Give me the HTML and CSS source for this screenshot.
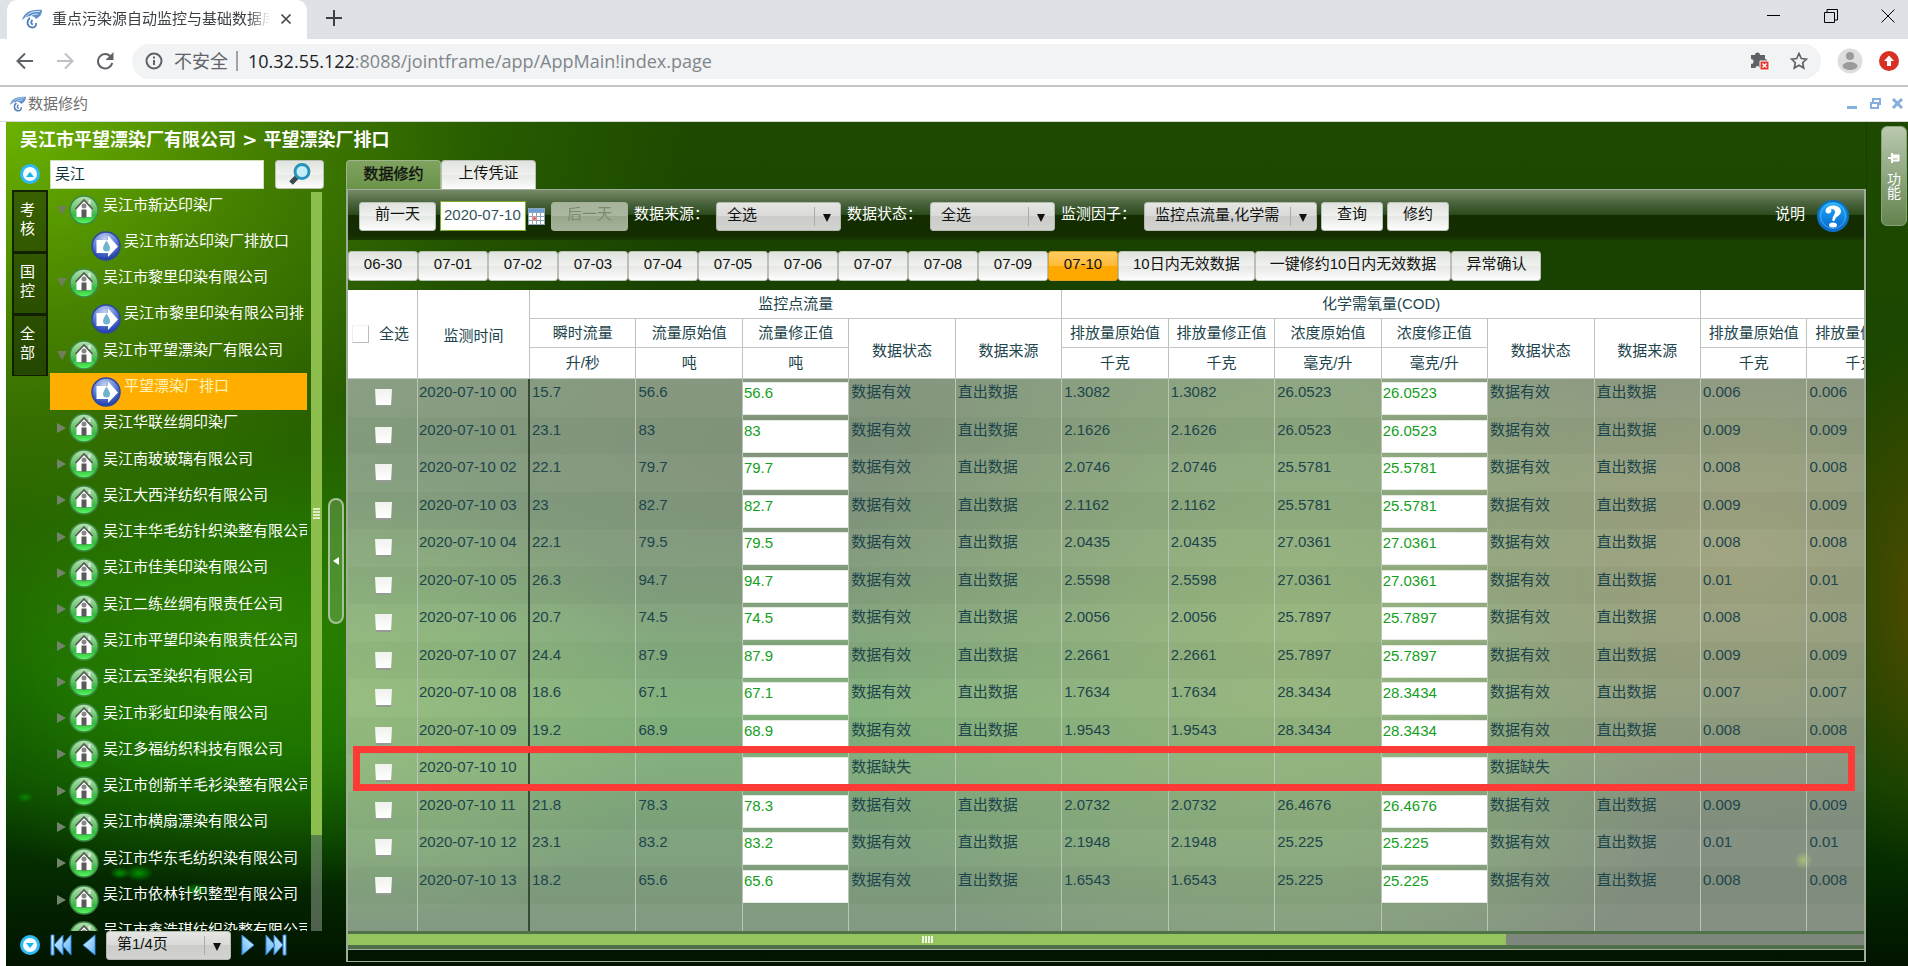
FILE: index.html
```html
<!DOCTYPE html>
<html lang="zh-CN">
<head>
    <meta charset="UTF-8">
    <meta name="viewport" content="width=device-width, initial-scale=1.0">
    <title>重点污染源自动监控与基础数据库</title>
    <link rel="stylesheet" href="styles.css">
</head>
<body>
    <!-- Shared icons -->
    <svg class="defs" width="0" height="0" aria-hidden="true">
        <defs>
            <linearGradient id="g-green" x1="0" y1="0" x2="0" y2="1">
                <stop offset="0" stop-color="#b9e2b6"/>
                <stop offset="0.45" stop-color="#6cc46e"/>
                <stop offset="0.7" stop-color="#35b843"/>
                <stop offset="1" stop-color="#5bff62"/>
            </linearGradient>
            <radialGradient id="g-blue" cx="45%" cy="25%" r="75%">
                <stop offset="0" stop-color="#c3d0ee"/>
                <stop offset="0.5" stop-color="#6a88dc"/>
                <stop offset="1" stop-color="#1b3aa8"/>
            </radialGradient>
            <linearGradient id="g-help" x1="0" y1="0" x2="0" y2="1">
                <stop offset="0" stop-color="#19aef5"/>
                <stop offset="1" stop-color="#0b63cf"/>
            </linearGradient>
            <linearGradient id="g-nav" x1="0" y1="0" x2="1" y2="1">
                <stop offset="0" stop-color="#e2f5ff"/>
                <stop offset="1" stop-color="#5fb4f5"/>
            </linearGradient>
        </defs>
        <symbol id="i-logo" viewBox="0 0 20 20">
            <path d="M0 11C2 4 8 0 20 1c0 4-2 7-6 9C12 6 6 6 0 11z" fill="#5c8fc9"/>
            <path d="M3 9C6 4 11 2 18 2.500M6 9c3-3 6-4 10-4" fill="none" stroke="#dceaf8"/>
            <path d="M8 9c-4 3-3 9 2 9.500c3 .2 4.500-2 4-4.500M10.500 11c-2 2-1.500 4 .5 4.500" fill="none" stroke="#4f7fb8" stroke-width="1.8"/>
        </symbol>
        <symbol id="i-house" viewBox="0 0 30 30">
            <circle cx="15" cy="15" r="14" fill="url(#g-green)" stroke="#3d8a45" stroke-width="1.500"/>
            <path d="M15 5.500L7.500 13v9h15v-9z" fill="#fff"/>
            <path d="M6.500 14l8.500-9 8.500 9" fill="none" stroke="#565c56" stroke-width="1.8"/>
            <path d="M20.500 5v4" stroke="#eee" stroke-width="2"/>
            <rect x="12.500" y="14.500" width="5" height="8" fill="#5a5a5a"/>
            <circle cx="15" cy="11" r="2.500" fill="#888"/>
        </symbol>
        <symbol id="i-outlet" viewBox="0 0 30 30">
            <circle cx="15" cy="15" r="14" fill="url(#g-blue)" stroke="#2c4a9e" stroke-width="1.500"/>
            <path d="M5.500 9H17V4.500l10 11L17 26v-4H5.500z" fill="#fff"/>
            <path d="M15.500 9.500c2 3 3.500 5.500 3.500 7.500a3.500 3.500 0 0 1-7 0c0-2 1.500-4.500 3.500-7.500z" fill="#72b4ce"/>
        </symbol>
        <symbol id="i-first" viewBox="0 0 22 22">
            <path d="M1 1h3v20H1zM13 1v20L4 11zM21 1v20l-9-10z" fill="url(#g-nav)" stroke="#2c86dd"/>
        </symbol>
        <symbol id="i-prev" viewBox="0 0 14 22">
            <path d="M13 1v20L1 11z" fill="url(#g-nav)" stroke="#2c86dd"/>
        </symbol>
    </svg>

    <!-- Browser tabs -->
    <div class="tabstrip">
        <div class="browser-tab">
            <svg class="favicon"><use href="#i-logo"/></svg>
            <span class="browser-tab-title">重点污染源自动监控与基础数据库</span>
            <button class="plain" aria-label="关闭标签页"><svg width="12" height="12" viewBox="0 0 12 12"><path d="M1.500 1.500l9 9M10.500 1.500l-9 9" stroke="#45494d" stroke-width="1.700"/></svg></button>
        </div>
        <button class="plain new-tab" aria-label="新标签页"><svg width="16" height="16" viewBox="0 0 16 16"><path d="M8 0v16M0 8h16" stroke="#3c4043" stroke-width="2"/></svg></button>
        <div class="window-buttons">
            <button class="plain" aria-label="最小化"><svg width="14" height="14" viewBox="0 0 14 14"><path d="M0 6.500h13" stroke="#000"/></svg></button>
            <button class="plain" aria-label="还原"><svg width="14" height="14" viewBox="0 0 14 14" fill="none" stroke="#000"><path d="M.5 3.500h10v10H.5zM3 3V.5h10.500V11H11"/></svg></button>
            <button class="plain" aria-label="关闭"><svg width="14" height="14" viewBox="0 0 14 14"><path d="M.5.5l13 13M13.500.5l-13 13" stroke="#000"/></svg></button>
        </div>
    </div>

    <!-- Address bar -->
    <div class="toolbar">
        <button class="plain" aria-label="后退"><svg width="18" height="18" viewBox="0 0 18 18" fill="none" stroke="#5f6368" stroke-width="2"><path d="M17 9H2M9 1.500L1.500 9 9 16.500"/></svg></button>
        <button class="plain" aria-label="前进"><svg width="18" height="18" viewBox="0 0 18 18" fill="none" stroke="#bdc1c6" stroke-width="2"><path d="M1 9h15M9 1.500L16.500 9 9 16.500"/></svg></button>
        <button class="plain" aria-label="刷新"><svg width="18" height="18" viewBox="0 0 18 18"><path d="M15 5a7.200 7.200 0 1 0 1.200 6" fill="none" stroke="#5f6368" stroke-width="2"/><path d="M17.500 0v8h-8z" fill="#5f6368"/></svg></button>
        <div class="omnibox">
            <svg width="18" height="18" viewBox="0 0 18 18"><circle cx="9" cy="9" r="7.500" fill="none" stroke="#5f6368" stroke-width="2"/><path d="M9 8v5M9 4.500v2" stroke="#5f6368" stroke-width="2"/></svg>
            <span class="insecure">不安全</span>
            <span class="url"><b>10.32.55.122</b>:8088/jointframe/app/AppMain!index.page</span>
            <svg width="20" height="20" viewBox="0 0 20 20"><path d="M1 4h4a2.500 2.500 0 0 1 5 0h5v4a2.500 2.500 0 0 1 0 5v4H9.500a2 2 0 0 0-4 0H1v-4a2.500 2.500 0 0 0 0-5z" fill="#5f6368"/><path d="M10 10h9v9h-9z" fill="#e5372d" stroke="#fff"/><path d="M12.500 12.500l4 4M16.500 12.500l-4 4" stroke="#fff" stroke-width="1.500"/></svg>
            <svg width="18" height="18" viewBox="0 0 18 18"><path d="M9 1.500l2.300 5 5.200.6-3.800 3.600 1 5.300L9 13.300 4.300 16l1-5.300L1.500 7.100l5.200-.6z" fill="none" stroke="#5f6368" stroke-width="1.700"/></svg>
        </div>
        <svg width="26" height="26" viewBox="0 0 26 26"><circle cx="13" cy="13" r="12.500" fill="#dedede"/><circle cx="13" cy="8" r="4" fill="#9b9b9b"/><ellipse cx="13" cy="18" rx="7.500" ry="4" fill="#9b9b9b"/></svg>
        <svg width="20" height="20" viewBox="0 0 20 20"><circle cx="10" cy="10" r="10" fill="#d93025"/><path d="M10 4.500l5 5.500h-3v5H8v-5H5z" fill="#fff"/></svg>
    </div>

    <!-- Inner window title -->
    <div class="window-title">
        <svg class="window-logo"><use href="#i-logo"/></svg>
        <span>数据修约</span>
        <svg width="56" height="12" viewBox="0 0 56 12" fill="none" stroke="#86aede">
            <path d="M0 9.500h10" stroke-width="3"/>
            <path d="M26 4V1h7v5h-3" stroke-width="2"/><path d="M24 5h7v5h-7z" stroke-width="2"/>
            <path d="M46 1l9 9M55 1l-9 9" stroke-width="3"/>
        </svg>
    </div>

    <div class="app">
        <div class="workspace">
            <h1>吴江市平望漂染厂有限公司 &gt; 平望漂染厂排口</h1>
            <div class="columns">
                <aside class="sidebar">
                    <div class="search-row">
                        <button class="plain round up" aria-label="上翻"></button>
                        <input type="text" class="search" value="吴江" aria-label="企业名称">
                        <button class="btn search-btn" aria-label="搜索">
                            <svg width="24" height="24" viewBox="0 0 24 24"><path d="M9 15l-6 6" stroke="#3b4a50" stroke-width="5"/><circle cx="14" cy="9.500" r="7" fill="#c6ecf7" stroke="#2795bb" stroke-width="3"/></svg>
                        </button>
                    </div>
                    <div class="tree-area">
                        <div class="side-tabs">
                            <button>考<br>核</button>
                            <button>国<br>控</button>
                            <button>全<br>部</button>
                        </div>
                        <div class="tree-view"><ul id="tree"></ul></div>
                        <div class="vscroll"><div class="vthumb"></div></div>
                        <button class="plain collapse" aria-label="收起"></button>
                    </div>
                    <div class="pager">
                        <button class="plain round down" aria-label="下翻"></button>
                        <button class="plain" aria-label="首页"><svg width="22" height="22"><use href="#i-first"/></svg></button>
                        <button class="plain" aria-label="上一页"><svg width="14" height="22"><use href="#i-prev"/></svg></button>
                        <span class="select page-select"><select aria-label="页码"><option>第1/4页</option></select></span>
                        <button class="plain flip" aria-label="下一页"><svg width="14" height="22"><use href="#i-prev"/></svg></button>
                        <button class="plain flip" aria-label="末页"><svg width="22" height="22"><use href="#i-first"/></svg></button>
                    </div>
                </aside>

                <main class="main">
                    <div class="tabs">
                        <button class="tab active">数据修约</button>
                        <button class="tab">上传凭证</button>
                    </div>
                    <div class="panel">
                        <!-- Filters -->
                        <div class="filters">
                            <button class="btn day-btn">前一天</button>
                            <input type="text" class="date" value="2020-07-10" aria-label="日期">
                            <svg class="calendar" width="17" height="17" viewBox="0 0 17 17"><path d="M0 0h17v17H0z" fill="#8fa3b8"/><path d="M1 1h15v3H1z" fill="#6f9fd8"/><path d="M1 5h3v3H1zM5 5h3v3H5zM9 5h3v3H9zM13 5h3v3h-3zM1 9h3v3H1zM9 9h3v3H9zM13 9h3v3h-3zM1 13h3v3H1zM5 13h3v3H5zM9 13h3v3H9zM13 13h3v3h-3z" fill="#fff"/><path d="M5 9h3v3H5z" fill="#f0433a" stroke="#f79a94"/></svg>
                            <button class="btn day-btn" disabled>后一天</button>
                            <label for="source" class="first-label">数据来源：</label>
                            <span class="select"><select id="source"><option>全选</option></select></span>
                            <label for="state">数据状态：</label>
                            <span class="select"><select id="state"><option>全选</option></select></span>
                            <label for="factor">监测因子：</label>
                            <span class="select factor"><select id="factor"><option>监控点流量,化学需</option></select></span>
                            <button class="btn small-btn">查询</button>
                            <button class="btn small-btn">修约</button>
                            <span class="help-text">说明</span>
                            <button class="plain" aria-label="帮助"><svg width="32" height="32" viewBox="0 0 32 32"><circle cx="16" cy="16" r="15" fill="url(#g-help)" stroke="#0d6fc4" stroke-width="2"/><circle cx="16" cy="16" r="12.500" fill="none" stroke="#6cc8fa" stroke-opacity=".6"/><path d="M8.500 11c0-3 3-5.500 7.500-5.500 5 0 8 2.500 8 6 0 4-5.500 4.500-6.500 9.500h-2c-.5-5 2.500-6 2.500-9 0-2.500-2-3.500-4-3 1 2 0 4.500-2.500 4.500-2 0-3-1-3-2.500z" fill="#fff"/><ellipse cx="16" cy="25" rx="4" ry="2.500" fill="#fff"/></svg></button>
                        </div>

                        <div class="days" id="days"></div>

                        <div class="grid">
                            <table>
                                <colgroup><col class="col-check"><col class="col-time"><col span="13"></colgroup>
                                <thead>
                                    <tr>
                                        <th rowspan="3" class="check-all"><label><input type="checkbox"> 全选</label></th>
                                        <th rowspan="3" class="tall">监测时间</th>
                                        <th colspan="5">监控点流量</th>
                                        <th colspan="6">化学需氧量(COD)</th>
                                        <th colspan="2"></th>
                                    </tr>
                                    <tr>
                                        <th>瞬时流量</th>
                                        <th>流量原始值</th>
                                        <th>流量修正值</th>
                                        <th rowspan="2" class="tall">数据状态</th>
                                        <th rowspan="2" class="tall">数据来源</th>
                                        <th>排放量原始值</th>
                                        <th>排放量修正值</th>
                                        <th>浓度原始值</th>
                                        <th>浓度修正值</th>
                                        <th rowspan="2" class="tall">数据状态</th>
                                        <th rowspan="2" class="tall">数据来源</th>
                                        <th>排放量原始值</th>
                                        <th>排放量修正值</th>
                                    </tr>
                                    <tr class="units">
                                        <th>升/秒</th>
                                        <th>吨</th>
                                        <th>吨</th>
                                        <th>千克</th>
                                        <th>千克</th>
                                        <th>毫克/升</th>
                                        <th>毫克/升</th>
                                        <th>千克</th>
                                        <th>千克</th>
                                    </tr>
                                </thead>
                                <tbody id="rows"></tbody>
                            </table>
                            <div class="highlight"></div>
                        </div>
                        <div class="hscroll"><div class="hthumb"></div></div>
                        <div class="panel-foot"></div>
                    </div>
                </main>
            </div>
        </div>
        <div class="dock">
            <button class="dock-tab">
                <svg width="12" height="12" viewBox="0 0 12 12"><path d="M0 6h4M4 1v10M4 3.500h7.500M4 8.500h7.500M10.500 3v6M4 5.500h6" fill="none" stroke="#fff" stroke-width="2"/></svg>
                <span>功<br>能</span>
            </button>
        </div>
    </div>

    <script src="script.js"></script>
</body>
</html>
```

FILE: styles.css
```css
* {
    box-sizing: border-box;
}
body {
    margin: 0;
    height: 100vh;
    display: flex;
    flex-direction: column;
    overflow: hidden;
    background: #fff;
    font-family: "Liberation Sans", "Noto Sans CJK SC", sans-serif;
    font-size: 15px;
    line-height: 20px;
}
button, input, select {
    font: inherit;
    margin: 0;
}
button {
    padding: 0;
    border: none;
    cursor: pointer;
}
svg {
    display: block;
    flex: none;
}
.defs {
    position: absolute;
}
.plain {
    background: none;
}

/* Browser */
.tabstrip {
    height: 39px;
    flex: none;
    display: flex;
    align-items: center;
    background: #dee1e6;
    padding-left: 7px;
}
.browser-tab {
    width: 300px;
    height: 39px;
    display: flex;
    align-items: center;
    padding: 0 15px 2px;
    background: #fff;
    border-radius: 10px 10px 0 0;
}
.favicon {
    width: 20px;
    height: 20px;
}
.browser-tab-title {
    width: 219px;
    margin: 0 10px;
    overflow: hidden;
    white-space: nowrap;
    color: #3c4043;
    -webkit-mask-image: linear-gradient(90deg, #000 90%, transparent);
    mask-image: linear-gradient(90deg, #000 90%, transparent);
}
.new-tab {
    margin-left: 19px;
    padding-bottom: 3px;
}
.window-buttons {
    margin-left: auto;
    display: flex;
    gap: 43px;
    padding: 0 13px 8px 0;
}
.toolbar {
    height: 48px;
    flex: none;
    display: flex;
    align-items: center;
    padding: 0 9px 2px 16px;
    border-bottom: 2px solid #c4c6c9;
}
.toolbar > button {
    margin-right: 22px;
}
.toolbar > svg {
    margin-left: 16px;
}
.omnibox {
    flex: 1;
    height: 35px;
    margin-left: -4px;
    display: flex;
    align-items: center;
    padding: 0 13px;
    border-radius: 18px;
    background: #f1f3f4;
    font-family: "Open Sans", "Noto Sans CJK SC", sans-serif;
    font-size: 18px;
    color: #80868b;
}
.omnibox svg:last-child {
    margin-left: 20px;
}
.insecure {
    margin-left: 11px;
    padding-right: 8px;
    border-right: 2px solid #a0a4a8;
    color: #5f6368;
}
.url {
    flex: 1;
    margin-left: 10px;
}
.url b {
    font-weight: normal;
    color: #202124;
}
.window-title {
    height: 35px;
    flex: none;
    display: flex;
    align-items: center;
    padding: 0 5px 0 8px;
    border-bottom: 1px solid #d5d8d2;
    color: #6e6e6e;
}
.window-title span {
    flex: 1;
}
.window-logo {
    width: 20px;
    height: 16px;
}

/* Application */
.app {
    flex: 1;
    min-height: 0;
    margin-left: 6px;
    display: flex;
    background:
        radial-gradient(ellipse 10px 6px at 6% 89%, rgba(0, 190, 0, 0.7), transparent),
        radial-gradient(ellipse 14px 8px at 7% 89%, rgba(0, 190, 0, 0.7), transparent),
        radial-gradient(ellipse 14px 7px at 10% 91%, rgba(0, 180, 0, 0.7), transparent),
        radial-gradient(ellipse 10px 6px at 4% 82%, rgba(0, 170, 0, 0.6), transparent),
        radial-gradient(ellipse 8px 5px at 1% 80%, rgba(0, 170, 0, 0.6), transparent),
        radial-gradient(ellipse 7% 32% at 101% 57%, #514c00, transparent),
        radial-gradient(ellipse 36% 68% at 0 0, #6cb200, rgba(78, 140, 0, 0.85) 35%, rgba(50, 110, 0, 0.5) 70%, transparent),
        radial-gradient(ellipse 24% 30% at 13% 61%, #2b8200, rgba(32, 122, 0, 0.9) 45%, transparent),
        linear-gradient(180deg, #1d4a00, #1a4400 45%, #084000 78%, #032000 94%, #021400);
}
.workspace {
    flex: 1;
    min-width: 0;
    display: flex;
    flex-direction: column;
    padding-bottom: 4px;
}
h1 {
    height: 38px;
    margin: 0;
    padding: 6px 14px;
    font-family: "DejaVu Sans", "Noto Sans CJK SC", sans-serif;
    font-size: 18px;
    line-height: 24px;
    color: #fff;
}
.columns {
    flex: 1;
    min-height: 0;
    display: flex;
}
.dock {
    width: 42px;
    padding: 4px 1px 0 14px;
    border-left: 1px solid rgba(0, 0, 0, 0.15);
}
.dock-tab {
    width: 26px;
    height: 100px;
    display: flex;
    flex-direction: column;
    align-items: center;
    justify-content: center;
    gap: 8px;
    border: 1px solid #8aa27c;
    border-radius: 6px;
    background: linear-gradient(#b9c9ae, #63834f);
    color: #fff;
    font-size: 14px;
    line-height: 14px;
}

/* Sidebar */
.sidebar {
    width: 340px;
    flex: none;
    display: flex;
    flex-direction: column;
}
.search-row {
    height: 30px;
    display: flex;
    align-items: center;
    padding: 0 0 2px 14px;
}
.round {
    width: 20px;
    height: 20px;
    display: flex;
    align-items: center;
    justify-content: center;
    border: 3px solid #2fb9f2;
    border-radius: 50%;
    background: #f4fcff;
}
.round::after {
    content: "";
    border: 4px solid transparent;
}
.up::after {
    border-top: none;
    border-bottom: 5px solid #17b4e6;
}
.down::after {
    border-bottom: none;
    border-top: 5px solid #17b4e6;
}
.search {
    width: 214px;
    height: 29px;
    margin: 0 11px 0 10px;
    padding: 0 4px 4px;
    border: 1px solid #cfe0bc;
    color: #0b333c;
}
.btn, .tab, .days button {
    border: 1px solid #b9c0b5;
    border-radius: 3px;
    background: linear-gradient(#dfe2dd, #f1f2f0 50%, #e6e8e4 50%, #fdfdfd);
    color: #0f120e;
}
.search-btn {
    width: 49px;
    height: 29px;
    display: flex;
    align-items: center;
    justify-content: center;
}
.tree-area {
    flex: 1;
    min-height: 0;
    display: flex;
    padding-left: 6px;
}
.side-tabs {
    width: 36px;
    margin-right: 2px;
}
.side-tabs button {
    display: block;
    width: 36px;
    height: 62px;
    padding: 0 5px 6px 0;
    border: 2px solid rgba(10, 20, 0, 0.8);
    border-bottom-width: 1px;
    background: rgba(0, 0, 0, 0.4);
    color: #fff;
    line-height: 19px;
}
.tree-view {
    width: 257px;
    margin-top: 2px;
    overflow: hidden;
}
#tree {
    height: calc(100% + 23px);
    margin: 0;
    padding: 0;
    display: grid;
    grid-auto-rows: 1fr;
    list-style: none;
}
.node {
    display: flex;
    align-items: center;
    gap: 4px;
    padding-left: 7px;
    overflow: hidden;
    white-space: nowrap;
    color: #fff;
}
.node svg {
    width: 30px;
    height: 30px;
}
.node span {
    padding-bottom: 11px;
}
.node::before {
    content: "";
    flex: none;
    margin-right: -1px;
    border: 5px solid transparent;
    border-left: 9px solid #74846c;
    border-right: none;
}
.node.open::before {
    border-left: 5px solid transparent;
    border-right: 5px solid transparent;
    border-top: 9px solid #6f7f5a;
    border-bottom: none;
    margin-right: -2px;
}
.node.child {
    gap: 3px;
    padding-left: 41px;
}
.node.child::before {
    display: none;
}
.node.selected {
    background: #ffae00;
    color: #fff3b8;
}
.vscroll {
    width: 11px;
    margin: 2px 0 0 4px;
    background: rgba(255, 255, 255, 0.3);
}
.vthumb {
    height: 87%;
    display: flex;
    align-items: center;
    background: #8cbf4d;
}
.vthumb::after {
    content: "";
    width: 7px;
    height: 11px;
    margin-left: 2px;
    background: repeating-linear-gradient(#dcecc4 0 2px, #8cbf4d 2px 3px);
}
.collapse {
    width: 16px;
    height: 126px;
    align-self: flex-start;
    margin: 308px 0 0 6px;
    display: flex;
    align-items: center;
    justify-content: flex-end;
    padding-right: 3px;
    border: 2px solid #a8bf98;
    border-radius: 8px;
    background: rgba(255, 255, 255, 0.18);
}
.collapse::after {
    content: "";
    border: 4px solid transparent;
    border-right: 6px solid #fff;
    border-left: none;
}
.pager {
    height: 31px;
    display: flex;
    align-items: center;
    gap: 10px;
    padding: 0 0 3px 14px;
}

/* next / last page */
.flip svg {
    transform: scaleX(-1);
}

/* Drop-downs */
.select {
    position: relative;
    width: 125px;
    height: 29px;
}
.select select {
    width: 100%;
    height: 29px;
    padding: 0 30px 2px 10px;
    appearance: none;
    border: 1px solid #b3b9af;
    border-radius: 3px;
    background: linear-gradient(#e4e6e2, #dadad9 50%, #cccccb 50%, #d2d2d1);
    color: #10130f;
}
.select::before {
    content: "";
    position: absolute;
    right: 26px;
    top: 5px;
    height: 19px;
    border-left: 1px solid #a9aea6;
}
.select::after {
    content: "";
    position: absolute;
    right: 10px;
    top: 12px;
    border: 4px solid transparent;
    border-top: 8px solid #111;
    border-bottom: none;
}
.factor {
    width: 173px;
}

/* Main panel */
.main {
    flex: 1;
    min-width: 0;
    display: flex;
    flex-direction: column;
}
.tabs {
    height: 29px;
    display: flex;
}
.tab {
    width: 95px;
    padding-bottom: 4px;
    border-radius: 4px 4px 0 0;
    border-bottom: none;
}
.tab.active {
    padding-bottom: 2px;
    border-color: #9db58a;
    background: linear-gradient(#7fa35f, #6b944a);
    -webkit-text-stroke: 0.4px #0f120e;
}
.panel {
    flex: 1;
    min-height: 0;
    display: flex;
    flex-direction: column;
    border: 2px solid #a1ad9b;
    border-top-width: 1px;
    border-bottom-width: 1px;
    background: rgba(0, 20, 0, 0.1);
}
.filters {
    height: 50px;
    display: flex;
    align-items: center;
    padding: 2px 15px 0 11px;
    background: linear-gradient(#758b67, #47613a 28%, #2c4a1b 50%, #132d00 50%, #132d00 90%, #183a00);
    color: #fff;
}
.filters .btn {
    height: 29px;
    padding-bottom: 4px;
}
.filters label {
    width: 89px;
    padding: 0 0 5px 6px;
    white-space: nowrap;
}
.filters .first-label {
    width: 88px;
}
.filters .btn.day-btn {
    width: 77px;
}
.filters .btn:disabled {
    background: linear-gradient(#a6b49c, #abb8a2 50%, #98a88c 50%, #a3b198);
    border-color: #a2b094;
    color: #7b8a6e;
}
.date {
    width: 86px;
    height: 30px;
    margin: 0 2px 0 4px;
    padding: 0 4px 4px 3px;
    border: 1px solid #7fae2b;
    color: #35525a;
}
.calendar {
    margin-right: 6px;
}
.filters .btn.small-btn {
    width: 62px;
    margin-left: 4px;
}
.help-text {
    margin: 0 12px 4px auto;
}
.days {
    display: flex;
    margin-top: 11px;
}
.days button {
    width: 70px;
    height: 30px;
    padding-bottom: 4px;
}
.days button.wide {
    width: auto;
    padding: 0 14px 4px;
}
.days button.active {
    border-color: #e0a020;
    background: linear-gradient(#ffcd62, #ffb938 50%, #ffa800 50%);
}

/* Data grid */
.grid {
    position: relative;
    flex: 1;
    min-height: 0;
    margin-top: 9px;
    overflow: hidden;
    background:
        radial-gradient(circle 9px at 96% 89%, rgba(190, 220, 120, 0.6), transparent),
        radial-gradient(ellipse 24% 42% at 92% 42%, #a2a581, rgba(160, 168, 128, 0.6) 50%, transparent),
        radial-gradient(ellipse 30% 60% at 62% 55%, #9ab680, transparent),
        radial-gradient(ellipse 22% 36% at 0 64%, #98bd80, transparent),
        radial-gradient(ellipse 40% 36% at 32% 24%, #83947d, transparent),
        linear-gradient(90deg, transparent 65%, rgba(133, 143, 130, 0.9) 85%),
        linear-gradient(180deg, #8ba184 14%, #85a280 40%, #84b37e 68%, #80a47e 85%, #839982);
}
table {
    width: calc(100% + 50px);
    height: 100%;
    table-layout: fixed;
    border-collapse: separate;
    border-spacing: 0;
    color: #1d454c;
}
.col-check {
    width: 70px;
}
.col-time {
    width: 112px;
}
th, td {
    padding: 0;
    font-weight: normal;
    white-space: nowrap;
    overflow: hidden;
    border-right: 1px solid #b9c6b7;
}
th {
    height: 29px;
    border-bottom: 1px solid #c3c8c4;
    background: #fff;
}
.units th {
    height: 31px;
}
th.tall {
    padding-top: 4px;
}
td {
    height: 37px;
    padding: 3px 0 0 2px;
    vertical-align: top;
}
tr:nth-child(odd) td {
    height: 38px;
}
tr:nth-child(even) td {
    background: rgba(0, 20, 0, 0.03);
}
td:nth-child(2) {
    padding-left: 1px;
    border-right: 2px solid #354a37;
}
td.check {
    padding: 10px 0 0 2px;
    text-align: center;
}
td.edit {
    padding: 3px 0 0;
}
.edit input {
    display: block;
    width: 100%;
    height: 33px;
    padding: 0 1px 13px;
    border: 1px solid #e3ebe0;
    border-width: 1px 0;
    background: #fff;
    color: #14a01c;
}
tr:nth-child(n) td.filler {
    height: auto;
}
input[type="checkbox"] {
    appearance: none;
    display: block;
    width: 17px;
    height: 18px;
    margin: 0 auto;
    border-bottom: 2px solid #949c94;
    background: linear-gradient(#f0f2ee, #fff);
    clip-path: polygon(0 0, 100% 0, 94% 100%, 6% 100%);
}
.check-all label {
    display: flex;
    align-items: center;
    gap: 10px;
    padding-left: 4px;
}
.check-all input[type="checkbox"] {
    margin: 0;
    border: 1px solid #b9beb9;
    border-top-color: #f4f4f4;
    border-left-color: #eee;
    background: #fff;
    clip-path: none;
}

/* Frame round the hour with missing data */
.highlight {
    position: absolute;
    left: 5px;
    right: 9px;
    top: 456px;
    height: 45px;
    border: 7px solid #fd3a36;
    pointer-events: none;
}
.hscroll {
    height: 18px;
    padding: 3px 0 4px;
    background: linear-gradient(#4f7347 3px, #7d877b 3px 14px, #4f6f4a 14px);
}
.hthumb {
    width: calc(76% + 6px);
    height: 11px;
    display: flex;
    align-items: center;
    justify-content: center;
    background: #95c35e;
}
.hthumb::after {
    content: "";
    width: 11px;
    height: 7px;
    background: repeating-linear-gradient(90deg, #eef7e0 0 2px, #95c35e 2px 3px);
}
.panel-foot {
    height: 12px;
    border-top: 1px solid #a1ad9b;
}
```

FILE: script.js
```js
// company tree: o = open company, c = outlet, s = selected outlet
const nodes = [
    ["o", "吴江市新达印染厂"],
    ["c", "吴江市新达印染厂排放口"],
    ["o", "吴江市黎里印染有限公司"],
    ["c", "吴江市黎里印染有限公司排"],
    ["o", "吴江市平望漂染厂有限公司"],
    ["s", "平望漂染厂排口"],
    ["", "吴江华联丝绸印染厂"],
    ["", "吴江南玻玻璃有限公司"],
    ["", "吴江大西洋纺织有限公司"],
    ["", "吴江丰华毛纺针织染整有限公司"],
    ["", "吴江市佳美印染有限公司"],
    ["", "吴江二练丝绸有限责任公司"],
    ["", "吴江市平望印染有限责任公司"],
    ["", "吴江云圣染织有限公司"],
    ["", "吴江市彩虹印染有限公司"],
    ["", "吴江多福纺织科技有限公司"],
    ["", "吴江市创新羊毛衫染整有限公司"],
    ["", "吴江市横扇漂染有限公司"],
    ["", "吴江市华东毛纺织染有限公司"],
    ["", "吴江市依林针织整型有限公司"],
    ["", "吴江市鑫浩琪纺织染整有限公司"]
];
const classes = { o: "node open", c: "node child", s: "node child selected", "": "node" };

document.getElementById("tree").innerHTML = nodes.map(([kind, name]) => {
    const icon = kind === "c" || kind === "s" ? "i-outlet" : "i-house";
    return `<li class="${classes[kind]}"><svg><use href="#${icon}"/></svg><span>${name}</span></li>`;
}).join("");

// day buttons
const days = ["06-30", "07-01", "07-02", "07-03", "07-04", "07-05", "07-06", "07-07", "07-08", "07-09", "07-10"];
const actions = ["10日内无效数据", "一键修约10日内无效数据", "异常确认"];

document.getElementById("days").innerHTML =
    days.map(d => `<button${d === "07-10" ? ' class="active"' : ""}>${d}</button>`).join("") +
    actions.map(a => `<button class="wide">${a}</button>`).join("");

// hour, flow, total flow, COD emission, COD concentration, next factor emission
const data = [
    ["00", "15.7", "56.6", "1.3082", "26.0523", "0.006"],
    ["01", "23.1", "83", "2.1626", "26.0523", "0.009"],
    ["02", "22.1", "79.7", "2.0746", "25.5781", "0.008"],
    ["03", "23", "82.7", "2.1162", "25.5781", "0.009"],
    ["04", "22.1", "79.5", "2.0435", "27.0361", "0.008"],
    ["05", "26.3", "94.7", "2.5598", "27.0361", "0.01"],
    ["06", "20.7", "74.5", "2.0056", "25.7897", "0.008"],
    ["07", "24.4", "87.9", "2.2661", "25.7897", "0.009"],
    ["08", "18.6", "67.1", "1.7634", "28.3434", "0.007"],
    ["09", "19.2", "68.9", "1.9543", "28.3434", "0.008"],
    ["10", "", "", "", "", ""],
    ["11", "21.8", "78.3", "2.0732", "26.4676", "0.009"],
    ["12", "23.1", "83.2", "2.1948", "25.225", "0.01"],
    ["13", "18.2", "65.6", "1.6543", "25.225", "0.008"]
];

function cell(value) {
    return `<td>${value}</td>`;
}

function editCell(value, label) {
    return `<td class="edit"><input type="text" value="${value}" aria-label="${label}"></td>`;
}

document.getElementById("rows").innerHTML = data.map(([hour, flow, total, cod, conc, next]) => {
    const time = `2020-07-10 ${hour}`;
    const state = flow ? "数据有效" : "数据缺失";
    const source = flow ? "直出数据" : "";
    return `<tr>
        <td class="check"><input type="checkbox" aria-label="${time}"></td>
        ${cell(time)}${cell(flow)}${cell(total)}${editCell(total, "流量修正值")}
        ${cell(state)}${cell(source)}
        ${cell(cod)}${cell(cod)}${cell(conc)}${editCell(conc, "浓度修正值")}
        ${cell(state)}${cell(source)}
        ${cell(next)}${cell(next)}
    </tr>`;
}).join("") + "<tr>" + '<td class="filler"></td>'.repeat(15) + "</tr>";
```
